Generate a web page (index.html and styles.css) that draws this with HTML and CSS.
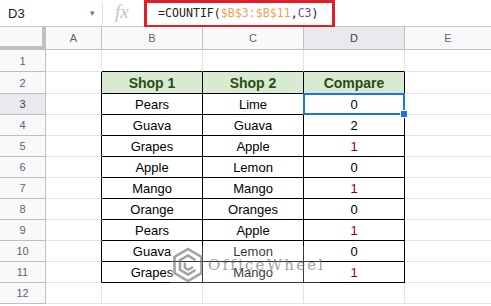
FILE: index.html
```html
<!DOCTYPE html>
<html lang="en">
<head>
  <meta charset="UTF-8">
  <meta name="viewport" content="width=device-width, initial-scale=1.0">
  <title>COUNTIF compare</title>
  <link rel="stylesheet" href="styles.css">
</head>
<body>
  <!-- Formula bar -->
  <div class="formula-bar">
    <div class="name-box">D3<span class="drop">&#9662;</span></div>
    <div class="fx">fx</div>
    <div class="formula">=COUNTIF(<span class="ref">$B$3:$B$11</span>,<span class="ref2">C3</span>)</div>
    <div class="highlight"></div>
  </div>

  <!-- Sheet grid -->
  <div class="sheet">
    <div class="corner"></div>
    <div class="col-head">A</div>
    <div class="col-head">B</div>
    <div class="col-head">C</div>
    <div class="col-head active">D</div>
    <div class="col-head last">E</div>

    <div class="row-head tall">1</div>
    <div class="cell tall"></div>
    <div class="cell tall edge-b"></div>
    <div class="cell tall edge-b"></div>
    <div class="cell tall edge-b"></div>
    <div class="cell tall last"></div>

    <div class="row-head tall">2</div>
    <div class="cell tall edge-r"></div>
    <div class="cell tall data head">Shop 1</div>
    <div class="cell tall data head">Shop 2</div>
    <div class="cell tall data head">Compare</div>
    <div class="cell tall last"></div>

    <div class="row-head active">3</div>
    <div class="cell edge-r"></div>
    <div class="cell data">Pears</div>
    <div class="cell data">Lime</div>
    <div class="cell data selected">0</div>
    <div class="cell last"></div>

    <div class="row-head">4</div>
    <div class="cell edge-r"></div>
    <div class="cell data">Guava</div>
    <div class="cell data">Guava</div>
    <div class="cell data">2</div>
    <div class="cell last"></div>

    <div class="row-head">5</div>
    <div class="cell edge-r"></div>
    <div class="cell data">Grapes</div>
    <div class="cell data">Apple</div>
    <div class="cell data red">1</div>
    <div class="cell last"></div>

    <div class="row-head">6</div>
    <div class="cell edge-r"></div>
    <div class="cell data">Apple</div>
    <div class="cell data">Lemon</div>
    <div class="cell data">0</div>
    <div class="cell last"></div>

    <div class="row-head">7</div>
    <div class="cell edge-r"></div>
    <div class="cell data">Mango</div>
    <div class="cell data">Mango</div>
    <div class="cell data red">1</div>
    <div class="cell last"></div>

    <div class="row-head">8</div>
    <div class="cell edge-r"></div>
    <div class="cell data">Orange</div>
    <div class="cell data">Oranges</div>
    <div class="cell data">0</div>
    <div class="cell last"></div>

    <div class="row-head">9</div>
    <div class="cell edge-r"></div>
    <div class="cell data">Pears</div>
    <div class="cell data">Apple</div>
    <div class="cell data red">1</div>
    <div class="cell last"></div>

    <div class="row-head">10</div>
    <div class="cell edge-r"></div>
    <div class="cell data">Guava</div>
    <div class="cell data">Lemon</div>
    <div class="cell data">0</div>
    <div class="cell last"></div>

    <div class="row-head">11</div>
    <div class="cell edge-r"></div>
    <div class="cell data">Grapes</div>
    <div class="cell data">Mango</div>
    <div class="cell data red">1</div>
    <div class="cell last"></div>

    <div class="row-head">12</div>
    <div class="cell"></div>
    <div class="cell"></div>
    <div class="cell"></div>
    <div class="cell"></div>
    <div class="cell last"></div>

    <!-- Watermark -->
    <div class="watermark">
      <svg class="wm-logo" width="32" height="36" viewBox="0 0 32 36">
        <path d="M16 2 L29.5 10 L29.5 26 L16 34 L2.5 26 L2.5 10 Z" fill="none" stroke="#7a7a7a" stroke-width="2.6"/>
        <path d="M23.5 13 L16 8.5 L8 13.2 L8 22.8 L16 27.5 L23.5 23" fill="none" stroke="#7a7a7a" stroke-width="2.6"/>
        <path d="M12.8 15.5 L12.8 20.8 L16.2 22.8 L21 20" fill="none" stroke="#7a7a7a" stroke-width="2.4"/>
      </svg>
      <span class="wm-text">OfficeWheel</span>
    </div>
  </div>
</body>
</html>
```

FILE: styles.css
```css
body {
  margin: 0;
  padding: 0;
  font-family: Arial, "Liberation Sans", sans-serif;
  background: #fff;
  overflow: hidden;
}

/* Formula bar */
.formula-bar {
  position: relative;
  display: flex;
  align-items: center;
  height: 27px;
  border-bottom: 1px solid #c7c7c7;
  box-sizing: border-box;
}

.name-box {
  display: flex;
  align-items: center;
  justify-content: space-between;
  width: 103px;
  padding: 0 8px;
  box-sizing: border-box;
  font-size: 13px;
  color: #222;
  height: 21px;
  border-right: 1px solid #dadce0;
  margin-right: 8px;
}

.name-box .drop {
  font-size: 9px;
  color: #777;
  margin-right: -1px;
}

.fx {
  font-family: "Liberation Serif", serif;
  font-style: italic;
  font-size: 19px;
  color: #c4c4c4;
  width: 47px;
  padding-left: 4px;
  box-sizing: border-box;
  margin-top: -2px;
}

.formula {
  font-family: "DejaVu Sans Mono", monospace;
  font-size: 11.6px;
  color: #222;
}

.formula .ref {
  color: #f5a05a;
}

.formula .ref2 {
  color: #8a3d9e;
}

/* red annotation box drawn over the bar */
.highlight {
  position: absolute;
  left: 144px;
  top: 0;
  width: 191px;
  height: 28px;
  border: 3px solid #e41e26;
  box-sizing: border-box;
}

/* Sheet */
.sheet {
  position: relative;
  display: grid;
  grid-template-columns: 46px 56px 101px 101px 101px 1fr;
  grid-template-rows: 23px 22px 22px repeat(10, 21px);
  font-size: 13px;
}

.sheet > div {
  box-sizing: border-box;
  border-right: 1px solid #e2e3e3;
  border-bottom: 1px solid #e2e3e3;
}

.corner {
  background: #f8f9fa;
  border-right: 4px solid #c0c0c0 !important;
  border-bottom: 4px solid #c0c0c0 !important;
}

.col-head,
.row-head {
  display: flex;
  align-items: center;
  justify-content: center;
  background: #f8f9fa;
  color: #5f6368;
  font-size: 11px;
  border-color: #c0c0c0 !important;
}

.col-head.last {
  border-right: none !important;
}

.col-head.active,
.row-head.active {
  background: #e8eaed;
  color: #3c4043;
}

.cell.last {
  border-right: none !important;
}

.cell.edge-r {
  border-right-color: #000 !important;
}

.cell.edge-b {
  border-bottom-color: #000 !important;
}

.cell.data {
  display: flex;
  align-items: center;
  justify-content: center;
  color: #000;
  border-right-color: #000 !important;
  border-bottom-color: #000 !important;
  padding-top: 1px;
}

.cell.head {
  background: #d9ead3;
  color: #274e13;
  font-weight: bold;
  font-size: 14px;
}

.cell.red {
  color: #990000;
}

.cell.selected {
  position: relative;
}

.cell.selected::before {
  content: "";
  position: absolute;
  left: -1px;
  top: -1px;
  right: -1px;
  bottom: -1px;
  border: 2px solid #1a73e8;
}

.cell.selected::after {
  content: "";
  position: absolute;
  right: -4px;
  bottom: -4px;
  width: 6px;
  height: 6px;
  background: #1a73e8;
  border: 1px solid #fff;
}

/* Watermark overlay */
.watermark {
  position: absolute;
  left: 170px;
  top: 219px;
  width: 150px;
  height: 37px;
  display: flex;
  align-items: center;
  gap: 4px;
  padding-left: 2px;
  box-sizing: border-box;
  background: rgba(255, 255, 255, 0.3);
  border: none !important;
  opacity: 0.7;
}

.wm-logo {
  flex-shrink: 0;
}

.wm-text {
  font-family: "DejaVu Serif", serif;
  font-size: 15px;
  letter-spacing: 2.2px;
  color: #7a7a7a;
  margin-top: 1px;
  white-space: nowrap;
}
```
